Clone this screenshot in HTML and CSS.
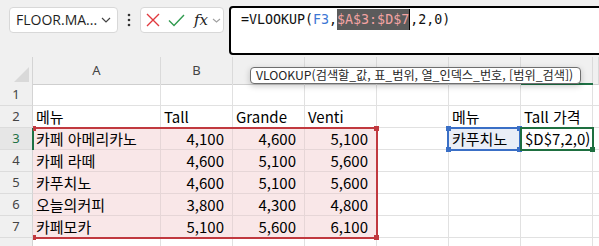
FILE: index.html
```html
<!DOCTYPE html>
<html lang="ko">
<head>
<meta charset="utf-8">
<link rel="stylesheet" href="styles.css">
</head>
<body>
<div class="toolbar">
  <div class="namebox">
    <span class="name">FLOOR.MA...</span>
    <svg class="chev" width="10" height="6" viewBox="0 0 10 6"><path d="M1 1 L5 5 L9 1" fill="none" stroke="#444" stroke-width="1.2"/></svg>
  </div>
  <div class="kebab">
    <svg width="4" height="14" viewBox="0 0 4 14"><circle cx="2" cy="2" r="1.3" fill="#333"/><circle cx="2" cy="7" r="1.3" fill="#333"/><circle cx="2" cy="12" r="1.3" fill="#333"/></svg>
  </div>
  <div class="fnbox">
    <svg class="ic-x" width="14" height="14" viewBox="0 0 14 14"><path d="M1 1 L13 13 M13 1 L1 13" stroke="#e0393e" stroke-width="1.4" fill="none"/></svg>
    <svg class="ic-ok" width="17" height="13" viewBox="0 0 17 13"><path d="M1 6.5 L6 11.5 L16 1" stroke="#2f9a4e" stroke-width="1.4" fill="none"/></svg>
    <span class="fx">fx</span>
    <svg class="chev2" width="9" height="5" viewBox="0 0 9 5"><path d="M1 1 L4.5 4 L8 1" fill="none" stroke="#a0a0a0" stroke-width="1.1"/></svg>
  </div>
  <div class="formula"><span>=VLOOKUP(</span><span class="ref-f">F3</span><span>,</span><span class="hl">$A$3:$D$7</span><span class="caret"></span><span>,2,0)</span></div>
</div>

<div class="sheet">
  <div class="row head">
    <div class="corner"><svg width="15" height="15" viewBox="0 0 15 15"><path d="M15 0 L15 15 L0 15 Z" fill="#d9d9d9"/></svg></div>
    <div class="ch">A</div><div class="ch">B</div><div class="ch"></div><div class="ch"></div><div class="ch"></div><div class="ch"></div><div class="ch"></div><div class="ch"></div>
  </div>
  <div class="row">
    <div class="rh">1</div>
    <div class="c"></div><div class="c"></div><div class="c"></div><div class="c"></div><div class="c"></div><div class="c"></div><div class="c"></div><div class="c"></div>
  </div>
  <div class="row">
    <div class="rh">2</div>
    <div class="c">메뉴</div><div class="c">Tall</div><div class="c">Grande</div><div class="c">Venti</div><div class="c"></div><div class="c">메뉴</div><div class="c">Tall 가격</div><div class="c"></div>
  </div>
  <div class="row">
    <div class="rh active">3</div>
    <div class="c red">카페 아메리카노</div><div class="c red num">4,100</div><div class="c red num">4,600</div><div class="c red num">5,100</div><div class="c"></div><div class="c blue">카푸치노</div><div class="c edit">$D$7,2,0)</div><div class="c"></div>
  </div>
  <div class="row">
    <div class="rh">4</div>
    <div class="c red">카페 라떼</div><div class="c red num">4,600</div><div class="c red num">5,100</div><div class="c red num">5,600</div><div class="c"></div><div class="c"></div><div class="c"></div><div class="c"></div>
  </div>
  <div class="row">
    <div class="rh">5</div>
    <div class="c red">카푸치노</div><div class="c red num">4,600</div><div class="c red num">5,100</div><div class="c red num">5,600</div><div class="c"></div><div class="c"></div><div class="c"></div><div class="c"></div>
  </div>
  <div class="row">
    <div class="rh">6</div>
    <div class="c red">오늘의커피</div><div class="c red num">3,800</div><div class="c red num">4,300</div><div class="c red num">4,800</div><div class="c"></div><div class="c"></div><div class="c"></div><div class="c"></div>
  </div>
  <div class="row">
    <div class="rh">7</div>
    <div class="c red">카페모카</div><div class="c red num">5,100</div><div class="c red num">5,600</div><div class="c red num">6,100</div><div class="c"></div><div class="c"></div><div class="c"></div><div class="c"></div>
  </div>
  <div class="row">
    <div class="rh"></div>
    <div class="c"></div><div class="c"></div><div class="c"></div><div class="c"></div><div class="c"></div><div class="c"></div><div class="c"></div><div class="c"></div>
  </div>

  <div class="colmark"></div>
  <div class="rowmark"></div>
  <div class="frame-red">
    <i class="h tl"></i><i class="h tr"></i><i class="h bl"></i><i class="h br"></i>
  </div>
  <div class="frame-blue">
    <i class="h tl"></i><i class="h tr"></i><i class="h bl"></i><i class="h br"></i>
  </div>
  <div class="frame-green"><i class="fill-handle"></i></div>
  <div class="tip">VLOOKUP(검색할_값, 표_범위, 열_인덱스_번호, [범위_검색])</div>
</div>
</body>
</html>
```

FILE: styles.css
```css
* { box-sizing: border-box; }

html, body {
  margin: 0;
  width: 599px;
  height: 246px;
  overflow: hidden;
}

body {
  background: #f0f0f0;
  font-family: "Noto Sans CJK KR", "Noto Sans", sans-serif;
}

/* ---------- formula bar ---------- */
.toolbar {
  display: flex;
  align-items: flex-start;
  height: 57px;
  padding: 6px 0 0 9px;
}

.namebox {
  margin-top: 1px;
  width: 109px;
  height: 26px;
  background: #fff;
  border: 1px solid #d8d8d8;
  border-radius: 4px;
  display: flex;
  align-items: center;
  justify-content: space-between;
  padding: 0 6px 0 6px;
}

.name {
  font-family: "Open Sans", sans-serif;
  font-size: 14px;
  color: #1f1f1f;
  line-height: 24px;
}

.kebab {
  margin-top: 1px;
  width: 22px;
  height: 26px;
  display: flex;
  align-items: center;
  justify-content: center;
}

.fnbox {
  margin-top: 1px;
  width: 84px;
  height: 26px;
  background: #fff;
  border: 1px solid #d8d8d8;
  border-radius: 4px;
  display: flex;
  align-items: center;
  padding-left: 5px;
}

.ic-ok { margin-left: 8px; }

.fx {
  margin-left: 9px;
  font-family: "DejaVu Serif", "Liberation Serif", serif;
  font-style: italic;
  font-size: 15px;
  color: #222;
  line-height: 24px;
}

.chev2 { margin-left: 4px; }

.formula {
  flex: 1;
  margin: 0 -12px 0 5px;
  height: 49px;
  background: #fff;
  border: 2px solid #000;
  border-radius: 4px;
  padding: 1px 0 0 10px;
  font-family: "DejaVu Sans Mono", "Liberation Mono", monospace;
  font-size: 13.3px;
  line-height: 21px;
  white-space: pre;
  color: #111;
}

.formula span { display: inline-block; vertical-align: top; }

.ref-f { color: #3d77d4; }

.hl {
  background: #5b5b5b;
  color: #f4a3a3;
}

.formula .caret {
  width: 1px;
  height: 21px;
  background: #000;
}

/* ---------- sheet ---------- */
.sheet {
  position: relative;
  background: #fff;
  height: 189px;
  overflow: hidden;
}

.row {
  display: grid;
  grid-template-columns: 33px 128px repeat(6, 72px) 1fr;
  height: 22px;
}

.row.head {
  height: 27px;
  background: #f0f0f0;
}

.corner {
  border-right: 1px solid #d4d4d4;
  border-bottom: 1px solid #cfcfcf;
  display: flex;
  align-items: flex-end;
  justify-content: flex-end;
  padding: 0 3px 2px 0;
}

.corner svg { display: block; }

.ch {
  border-right: 1px solid #dadada;
  border-bottom: 1px solid #cfcfcf;
  text-align: center;
  font-family: "Noto Sans", sans-serif;
  font-size: 13px;
  line-height: 27px;
  color: #444;
}

.rh {
  background: #f0f0f0;
  border-right: 1px solid #d4d4d4;
  border-bottom: 1px solid #dcdcdc;
  text-align: center;
  font-family: "Noto Sans", sans-serif;
  font-size: 13px;
  line-height: 21px;
  color: #444;
}

.rh.active {
  background: #e6e6e6;
  color: #1e7145;
}

.c {
  border-right: 1px solid #e1e1e1;
  border-bottom: 1px solid #e1e1e1;
  padding: 0 3px;
  font-size: 15px;
  line-height: 21px;
  color: #000;
  white-space: nowrap;
  overflow: hidden;
}

.c.num {
  text-align: right;
  padding-right: 8px;
}

.c.red {
  background: #f9e7e8;
  border-color: #e6d6d7;
}

.c.blue {
  background: #e9eef7;
}

.c.edit {
  padding-left: 4px;
}

/* ---------- overlays ---------- */
.colmark {
  position: absolute;
  left: 521px;
  top: 26px;
  width: 72px;
  height: 2px;
  background: #1e7145;
}

.rowmark {
  position: absolute;
  left: 32px;
  top: 71px;
  width: 2px;
  height: 22px;
  background: #1e7145;
}

.frame-red,
.frame-blue,
.frame-green {
  position: absolute;
  border: 2px solid;
}

.frame-red {
  left: 33px;
  top: 70px;
  width: 345px;
  height: 112px;
  border-color: #c1393f;
  border-left: none;
}

.frame-blue {
  left: 447px;
  top: 70px;
  width: 74px;
  height: 24px;
  border-color: #3a6fc6;
}

.frame-green {
  left: 520px;
  top: 70px;
  width: 74px;
  height: 24px;
  border-color: #1e6f40;
}

.h {
  position: absolute;
  width: 5px;
  height: 5px;
}

.frame-red .h { background: #c1393f; }
.frame-blue .h { background: #3a6fc6; }

.frame-red .tl { left: 0; top: -3px; width: 3px; }
.frame-red .bl { left: 0; bottom: -3px; width: 3px; }
.frame-red .tr { right: -3px; top: -3px; }
.frame-red .br { right: -3px; bottom: -3px; }

.frame-blue .tl { left: -3px; top: -3px; }
.frame-blue .tr { right: -3px; top: -3px; }
.frame-blue .bl { left: -3px; bottom: -3px; }
.frame-blue .br { right: -3px; bottom: -3px; }

.fill-handle {
  position: absolute;
  right: -3px;
  bottom: -3px;
  width: 5px;
  height: 5px;
  background: #1e6f40;
}

.tip {
  position: absolute;
  left: 250px;
  top: 10px;
  width: 331px;
  height: 17px;
  background: #fff;
  border: 1px solid #6e6e6e;
  border-radius: 4px;
  box-shadow: 0 2px 6px rgba(0, 0, 0, 0.22);
  padding-left: 5px;
  font-size: 12.2px;
  line-height: 15px;
  color: #262626;
  white-space: nowrap;
  overflow: hidden;
}
```
